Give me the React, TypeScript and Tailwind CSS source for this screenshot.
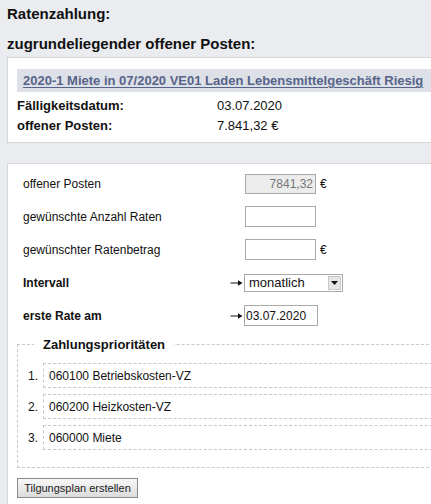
import React from "react";

function Arrow() {
  return (
    <svg width="13" height="8" viewBox="0 0 13 8" className="block">
      <line x1="0.5" y1="4" x2="9" y2="4" stroke="#111" strokeWidth="1" />
      <path d="M8 1.2 L12.5 4 L8 6.8 Z" fill="#111" />
    </svg>
  );
}

export default function App() {
  const rows = [
    "060100 Betriebskosten-VZ",
    "060200 Heizkosten-VZ",
    "060000 Miete",
  ];
  return (
    <div
      className="w-[431px] h-[504px] overflow-hidden bg-[#eaecf0] text-[12px] text-[#111]"
      style={{ fontFamily: '"Liberation Sans", Arial, sans-serif' }}
    >
      <div className="w-[480px] pl-[7px]">
        <h1 className="pt-[5px] text-[15px] leading-[17px] font-bold">Ratenzahlung:</h1>
        <h2 className="mt-[13px] text-[15px] leading-[17px] font-bold">
          zugrundeliegender offener Posten:
        </h2>

        <div className="mt-[5px] border border-[#d3d6dc] bg-white pl-[9px] pt-[11px] pb-[6px] text-[13px]">
          <div className="h-[23px] bg-[#dde0e6] pl-[6px] leading-[23px]">
            <a className="font-bold text-[#56648a] underline decoration-1 underline-offset-[2px]">
              2020-1 Miete in 07/2020 VE01 Laden Lebensmittelgeschäft Riesig
            </a>
          </div>
          <div className="mt-[4px] flex h-[20px] items-center">
            <div className="w-[200px] font-bold">Fälligkeitsdatum:</div>
            <div>03.07.2020</div>
          </div>
          <div className="flex h-[20px] items-center">
            <div className="w-[200px] font-bold">offener Posten:</div>
            <div>7.841,32 €</div>
          </div>
        </div>

        <div className="mt-[20px] border border-[#d3d6dc] bg-white pt-[3px] pb-[40px]">
          <div className="pl-[15px]">
            <div className="flex h-[33px] items-center">
              <div className="w-[222px]">offener Posten</div>
              <div className="flex h-[20px] w-[71px] items-center justify-end border border-[#a9a9a9] bg-[#ececec] pr-[2px] text-[#777]">
                7841,32
              </div>
              <div className="ml-[4px]">€</div>
            </div>
            <div className="flex h-[33px] items-center">
              <div className="w-[222px]">gewünschte Anzahl Raten</div>
              <div className="h-[21px] w-[71px] border border-[#a9a9a9] bg-white" />
            </div>
            <div className="flex h-[33px] items-center">
              <div className="w-[222px]">gewünschter Ratenbetrag</div>
              <div className="h-[21px] w-[71px] border border-[#a9a9a9] bg-white" />
              <div className="ml-[4px]">€</div>
            </div>
            <div className="flex h-[33px] items-center">
              <div className="w-[207px] font-bold">Intervall</div>
              <div className="flex w-[14px] items-center">
                <Arrow />
              </div>
              <div className="flex h-[18px] w-[99px] items-stretch border border-[#a9a9a9] bg-white">
                <div className="flex-1 pl-[4px] text-[13px] leading-[15px]">monatlich</div>
                <div className="m-[1px] flex w-[13px] items-center justify-center border border-[#c8c8c8] bg-[#e6e6e6]">
                  <svg width="7" height="4" viewBox="0 0 7 4">
                    <path d="M0 0 L7 0 L3.5 4 Z" fill="#111" />
                  </svg>
                </div>
              </div>
            </div>
            <div className="flex h-[33px] items-center">
              <div className="w-[207px] font-bold">erste Rate am</div>
              <div className="flex w-[14px] items-center">
                <Arrow />
              </div>
              <div className="flex h-[21px] w-[74px] items-center border border-[#a9a9a9] bg-white pl-[1px]">
                03.07.2020
              </div>
            </div>
          </div>

          <fieldset className="mt-[5px] ml-[9px] border border-dashed border-[#c8c8c8] pb-[17px]">
            <legend className="ml-[16px] px-[9px] text-[13px] leading-[15px] font-bold">
              Zahlungsprioritäten
            </legend>
            <div className="flex flex-col gap-[6px] pt-[11px]">
              {rows.map((r, i) => (
                <div key={r} className="flex items-center">
                  <div className="w-[22px] pr-[2px] text-right">{i + 1}.</div>
                  <div className="ml-[3px] flex h-[25px] flex-1 items-center border border-dashed border-[#c8c8c8] pl-[5px]">
                    {r}
                  </div>
                </div>
              ))}
            </div>
          </fieldset>

          <button className="mt-[10px] ml-[9px] flex h-[20px] w-[121px] items-center justify-center border border-[#8a8a8a] bg-gradient-to-b from-[#f8f8f8] to-[#dcdcdc] text-[11px] text-[#222]">
            Tilgungsplan erstellen
          </button>
        </div>
      </div>
    </div>
  );
}
